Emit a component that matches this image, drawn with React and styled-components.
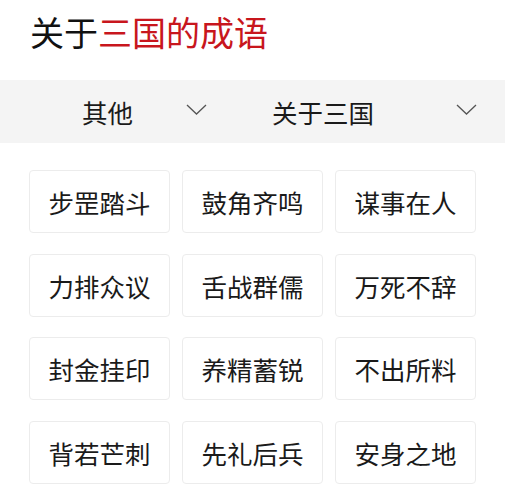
import styled, { createGlobalStyle } from 'styled-components';

const GlobalStyle = createGlobalStyle`
  body {
    margin: 0;
    background: #ffffff;
    font-family: "Noto Sans CJK SC", "Liberation Sans", sans-serif;
  }
`;

const idioms = [
  '步罡踏斗', '鼓角齐鸣', '谋事在人',
  '力排众议', '舌战群儒', '万死不辞',
  '封金挂印', '养精蓄锐', '不出所料',
  '背若芒刺', '先礼后兵', '安身之地',
];

const Chevron = () => (
  <svg width="21" height="11" viewBox="0 0 21 11" fill="none">
    <path d="M1 1 L10.5 10 L20 1" stroke="#555" strokeWidth="1.3" />
  </svg>
);

export default function App() {
  return (
    <>
      <GlobalStyle />
      <StPage>
        <StTitle>
          关于<StRed>三国的成语</StRed>
        </StTitle>
        <StFilterBar>
          <StFilter $left={82} $right={45}>
            <StFilterLabel>其他</StFilterLabel>
            <Chevron />
          </StFilter>
          <StFilter $left={20} $right={28}>
            <StFilterLabel>关于三国</StFilterLabel>
            <Chevron />
          </StFilter>
        </StFilterBar>
        <StGrid>
          {idioms.map((w) => (
            <StCard key={w}>{w}</StCard>
          ))}
        </StGrid>
      </StPage>
    </>
  );
}

const StPage = styled.div`
  width: 505px;
  height: 500px;
  overflow: hidden;
`;

const StTitle = styled.h1`
  margin: 0;
  padding: 8px 0 0 30px;
  height: 80px;
  box-sizing: border-box;
  font-size: 34px;
  font-weight: 400;
  line-height: 48px;
  color: #111;
`;

const StRed = styled.span`
  color: #c8161d;
`;

const StFilterBar = styled.div`
  height: 63px;
  background: #f4f4f4;
  display: grid;
  grid-template-columns: 252px 1fr;
`;

const StFilter = styled.div`
  display: flex;
  align-items: center;
  justify-content: space-between;
  padding: 0 ${(p) => p.$right}px 0 ${(p) => p.$left}px;

  svg {
    margin-top: -4px;
  }
`;

const StFilterLabel = styled.span`
  font-size: 25.5px;
  color: #1a1a1a;
`;

const StGrid = styled.div`
  display: grid;
  grid-template-columns: repeat(3, 141px);
  grid-auto-rows: 63px;
  column-gap: 12px;
  row-gap: 20.5px;
  padding: 27px 0 0 29px;
`;

const StCard = styled.div`
  box-sizing: border-box;
  border: 1px solid #ececec;
  border-radius: 4px;
  background: #fff;
  display: flex;
  align-items: center;
  justify-content: center;
  font-size: 25.5px;
  color: #1a1a1a;
`;
